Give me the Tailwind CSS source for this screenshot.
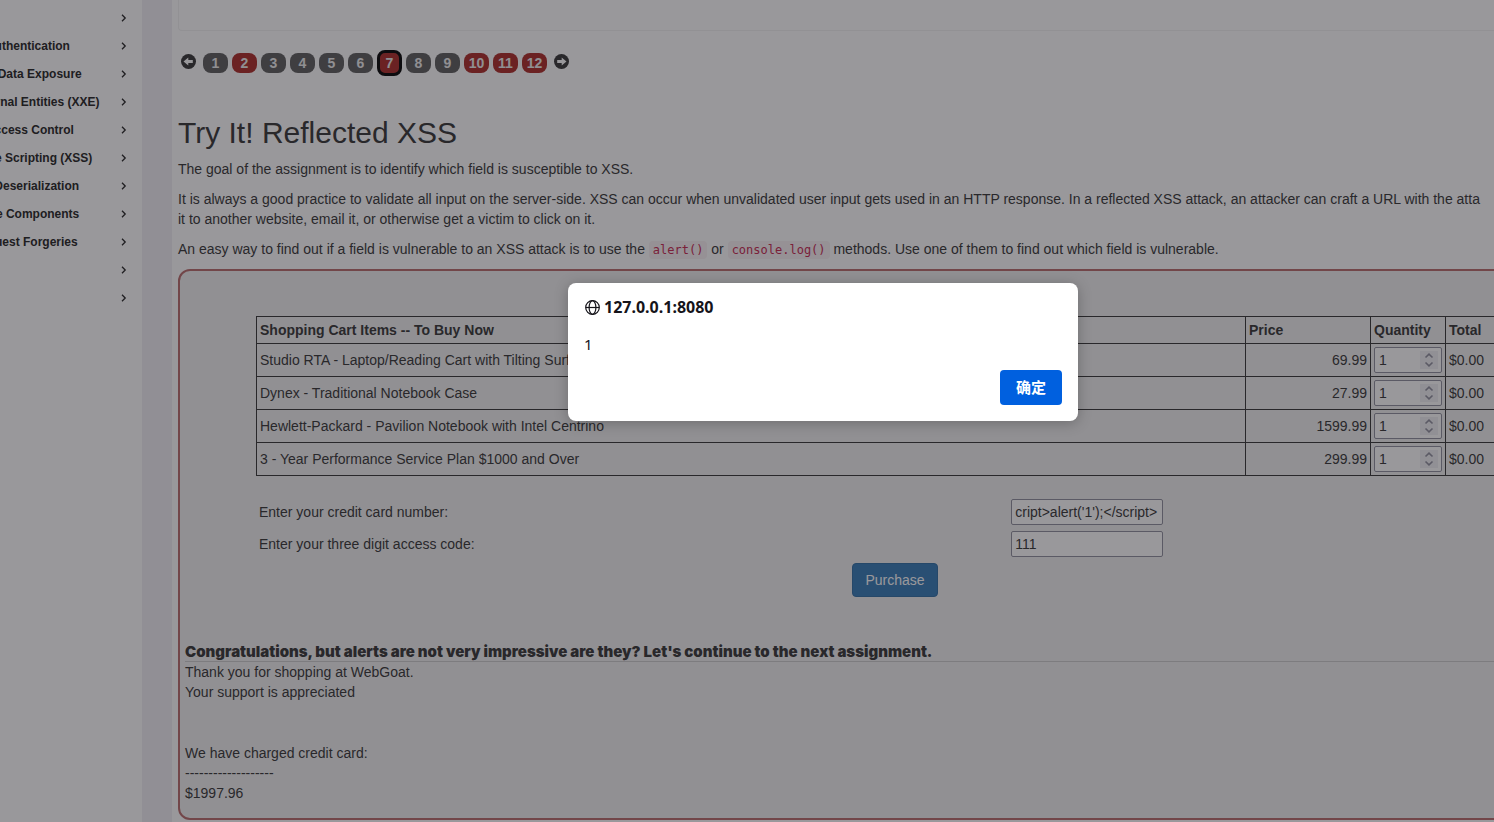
<!DOCTYPE html>
<html lang="en">
<head>
<meta charset="utf-8">
<title>WebGoat - Cross Site Scripting</title>
<script src="https://cdn.jsdelivr.net/npm/@tailwindcss/browser@4"></script>
</head>
<body class="relative min-h-screen overflow-hidden bg-white font-['Liberation_Sans',Arial,sans-serif] text-[14px] leading-5 text-[#333]">
<svg class="hidden" aria-hidden="true">
  <symbol id="chev" viewBox="0 0 6 8"><path d="M1 0.8 4.2 4 1 7.2" fill="none" stroke="currentColor" stroke-width="1.3"/></symbol>
  <symbol id="spin" viewBox="0 0 18 18"><path d="M5.5 6.5 9 3.2 12.5 6.5M5.5 11.5 9 14.8 12.5 11.5" fill="none" stroke="currentColor" stroke-width="1.6"/></symbol>
</svg>
<div class="flex min-h-screen">
  <aside class="w-[142px] shrink-0 overflow-hidden pt-1">
    <nav class="-ml-[85px] text-[12px] font-bold text-[#222]">
      <a href="#" aria-label="Injection" class="flex h-7 items-center justify-end pr-[15px]"><svg class="h-2 w-1.5"><use href="#chev"/></svg></a>
      <a href="#" class="flex h-7 items-center justify-between pr-[15px] whitespace-nowrap">(A2) Broken Authentication<svg class="h-2 w-1.5"><use href="#chev"/></svg></a>
      <a href="#" class="flex h-7 items-center justify-between pr-[15px] whitespace-nowrap">(A3) Sensitive Data Exposure<svg class="h-2 w-1.5"><use href="#chev"/></svg></a>
      <a href="#" class="flex h-7 items-center justify-between pr-[15px] whitespace-nowrap">(A4) XML External Entities (XXE)<svg class="h-2 w-1.5"><use href="#chev"/></svg></a>
      <a href="#" class="flex h-7 items-center justify-between pr-[15px] whitespace-nowrap">(A5) Broken Access Control<svg class="h-2 w-1.5"><use href="#chev"/></svg></a>
      <a href="#" class="flex h-7 items-center justify-between pr-[15px] whitespace-nowrap">(A7) Cross-Site Scripting (XSS)<svg class="h-2 w-1.5"><use href="#chev"/></svg></a>
      <a href="#" class="flex h-7 items-center justify-between pr-[15px] whitespace-nowrap">(A8) Insecure Deserialization<svg class="h-2 w-1.5"><use href="#chev"/></svg></a>
      <a href="#" class="flex h-7 items-center justify-between pr-[15px] whitespace-nowrap">(A9) Vulnerable Components<svg class="h-2 w-1.5"><use href="#chev"/></svg></a>
      <a href="#" class="flex h-7 items-center justify-between pr-[15px] whitespace-nowrap">(A8:2013) Request Forgeries<svg class="h-2 w-1.5"><use href="#chev"/></svg></a>
      <a href="#" aria-label="Client side" class="flex h-7 items-center justify-end pr-[15px]"><svg class="h-2 w-1.5"><use href="#chev"/></svg></a>
      <a href="#" aria-label="Challenges" class="flex h-7 items-center justify-end pr-[15px]"><svg class="h-2 w-1.5"><use href="#chev"/></svg></a>
    </nav>
  </aside>
  <div class="w-[30px] shrink-0 bg-[#f0eef4]"></div>
  <main class="-mr-[118px] min-w-0 flex-1 pl-1.5">
    <div class="h-[31px] rounded-b border-b border-l border-[#f3f3f3]"></div>
    <div class="mt-[19px] flex h-[26px] items-center gap-1 pl-[3px]">
      <a href="#" aria-label="Previous page" class="mr-[3px] pb-1"><svg class="size-[15px]" viewBox="0 0 15 15"><circle cx="7.500" cy="7.500" r="7.500" fill="#333"/><path d="M2.500 7.500 7.300 3.600V6H11.800V9H7.300V11.400Z" fill="#fff"/></svg></a>
      <a href="#" class="h-5 w-[25px] rounded-lg bg-[#5b5b5b] text-center font-bold text-[#eee]">1</a>
      <a href="#" class="h-5 w-[25px] rounded-lg bg-[#ac2925] text-center font-bold text-[#eee]">2</a>
      <a href="#" class="h-5 w-[25px] rounded-lg bg-[#5b5b5b] text-center font-bold text-[#eee]">3</a>
      <a href="#" class="h-5 w-[25px] rounded-lg bg-[#5b5b5b] text-center font-bold text-[#eee]">4</a>
      <a href="#" class="h-5 w-[25px] rounded-lg bg-[#5b5b5b] text-center font-bold text-[#eee]">5</a>
      <a href="#" class="h-5 w-[25px] rounded-lg bg-[#5b5b5b] text-center font-bold text-[#eee]">6</a>
      <a href="#" class="h-[26px] w-[25px] rounded-lg border-3 border-black bg-[#ac2925] text-center font-bold text-[#eee]">7</a>
      <a href="#" class="h-5 w-[25px] rounded-lg bg-[#5b5b5b] text-center font-bold text-[#eee]">8</a>
      <a href="#" class="h-5 w-[25px] rounded-lg bg-[#5b5b5b] text-center font-bold text-[#eee]">9</a>
      <a href="#" class="h-5 w-[25px] rounded-lg bg-[#ac2925] text-center font-bold text-[#eee]">10</a>
      <a href="#" class="h-5 w-[25px] rounded-lg bg-[#ac2925] text-center font-bold text-[#eee]">11</a>
      <a href="#" class="h-5 w-[25px] rounded-lg bg-[#ac2925] text-center font-bold text-[#eee]">12</a>
      <a href="#" aria-label="Next page" class="ml-[3px] pb-1"><svg class="size-[15px]" viewBox="0 0 15 15"><circle cx="7.500" cy="7.500" r="7.500" fill="#333"/><path d="M12.500 7.500 7.700 3.600V6H3.200V9H7.700V11.400Z" fill="#fff"/></svg></a>
    </div>
    <h1 class="mt-10 text-[30px] leading-[33px]">Try It! Reflected XSS</h1>
    <p class="mt-2.5">The goal of the assignment is to identify which field is susceptible to XSS.</p>
    <p class="mt-2.5 whitespace-nowrap">It is always a good practice to validate all input on the server-side. XSS can occur when unvalidated user input gets used in an HTTP response. In a reflected XSS attack, an attacker can craft a URL with the atta<br>it to another website, email it, or otherwise get a victim to click on it.</p>
    <p class="mt-2.5 h-5">An easy way to find out if a field is vulnerable to an XSS attack is to use the <code class="rounded bg-[#f9f2f4] px-1 py-0.5 font-['DejaVu_Sans_Mono',monospace] text-[12px] text-[#c7254e]">alert()</code> or <code class="rounded bg-[#f9f2f4] px-1 py-0.5 font-['DejaVu_Sans_Mono',monospace] text-[12px] text-[#c7254e]">console.log()</code> methods. Use one of them to find out which field is vulnerable.</p>

    <section class="mt-2.5 rounded-xl border-2 border-[#b96a6a] bg-[#f1f1f1] px-[5px] pb-[15px]">
      <form class="mx-auto w-[90%] pt-[45px]">
        <table class="w-full table-fixed border-collapse [&_td]:border [&_td]:border-[#333] [&_td]:px-[3px] [&_th]:border [&_th]:border-[#333] [&_th]:px-[3px] [&_th]:text-left">
          <thead>
            <tr class="h-[27px]"><th>Shopping Cart Items -- To Buy Now</th><th class="w-[125px]">Price</th><th class="w-[75px]">Quantity</th><th class="w-[88px]">Total</th></tr>
          </thead>
          <tbody>
            <tr class="h-[33px]"><td>Studio RTA - Laptop/Reading Cart with Tilting Surface - Cherry</td><td class="text-right">69.99</td><td><div class="flex h-[26px] w-[68px] items-center rounded-xs border border-[#8f8f9d] bg-white pr-[3px] pl-1"><input aria-label="Quantity of Studio RTA cart" value="1" class="w-0 flex-1 outline-none"><svg class="size-[18px] bg-[#f0f0f4] text-[#8f8f9d]"><use href="#spin"/></svg></div></td><td>$0.00</td></tr>
            <tr class="h-[33px]"><td>Dynex - Traditional Notebook Case</td><td class="text-right">27.99</td><td><div class="flex h-[26px] w-[68px] items-center rounded-xs border border-[#8f8f9d] bg-white pr-[3px] pl-1"><input aria-label="Quantity of Dynex case" value="1" class="w-0 flex-1 outline-none"><svg class="size-[18px] bg-[#f0f0f4] text-[#8f8f9d]"><use href="#spin"/></svg></div></td><td>$0.00</td></tr>
            <tr class="h-[33px]"><td>Hewlett-Packard - Pavilion Notebook with Intel Centrino</td><td class="text-right">1599.99</td><td><div class="flex h-[26px] w-[68px] items-center rounded-xs border border-[#8f8f9d] bg-white pr-[3px] pl-1"><input aria-label="Quantity of Pavilion notebook" value="1" class="w-0 flex-1 outline-none"><svg class="size-[18px] bg-[#f0f0f4] text-[#8f8f9d]"><use href="#spin"/></svg></div></td><td>$0.00</td></tr>
            <tr class="h-[33px]"><td>3 - Year Performance Service Plan $1000 and Over</td><td class="text-right">299.99</td><td><div class="flex h-[26px] w-[68px] items-center rounded-xs border border-[#8f8f9d] bg-white pr-[3px] pl-1"><input aria-label="Quantity of service plan" value="1" class="w-0 flex-1 outline-none"><svg class="size-[18px] bg-[#f0f0f4] text-[#8f8f9d]"><use href="#spin"/></svg></div></td><td>$0.00</td></tr>
          </tbody>
        </table>
        <div class="mt-[23px] grid grid-cols-[59%_1fr] items-center gap-y-1.5 pl-[3px]">
          <label for="card">Enter your credit card number:</label>
          <input id="card" value="cript&gt;alert('1');&lt;/script&gt;" class="h-[26px] w-[152px] rounded-xs border border-[#8f8f9d] bg-white px-[3px]">
          <label for="code">Enter your three digit access code:</label>
          <input id="code" value="111" class="h-[26px] w-[152px] rounded-xs border border-[#8f8f9d] bg-white px-[3px]">
        </div>
        <div class="mt-1.5 text-center"><button type="button" class="h-[34px] rounded border border-[#2e6da4] bg-[#337ab7] px-3 align-top text-white">Purchase</button></div>
      </form>
      <p class="mt-[45px] border-b border-[#ccc] font-['Inter','Liberation_Sans',sans-serif] text-[15px] leading-[19px] font-black">Congratulations, but alerts are not very impressive are they? Let's continue to the next assignment.</p>
      <p>Thank you for shopping at WebGoat.<br>Your support is appreciated</p>
      <p class="mt-[41px]">We have charged credit card:<br>-------------------<br>$1997.96</p>
    </section>
  </main>
</div>
<div class="absolute inset-0 bg-[#1c1b22]/45"></div>
<div role="alertdialog" aria-labelledby="origin" class="absolute top-[283px] left-[568px] flex w-[510px] flex-col rounded-lg bg-white p-4 font-['Noto_Sans','Noto_Sans_CJK_SC',sans-serif] text-[15px] text-[#15141a] shadow-[0_2px_14px_rgba(0,0,0,0.25)]">
  <div class="flex h-4 items-center gap-1 pl-px">
    <svg class="size-[15px]" viewBox="0 0 15 15" fill="none" stroke="currentColor" stroke-width="1.200"><circle cx="7.500" cy="7.500" r="6.800"/><ellipse cx="7.500" cy="7.500" rx="3.400" ry="6.800"/><path d="M.8 7.500H14.200"/></svg>
    <strong id="origin" class="text-[16px]">127.0.0.1:8080</strong>
  </div>
  <p class="mt-[19px]">1</p>
  <button type="button" class="mt-4 h-[35px] w-[62px] self-end rounded bg-[#0060df] pb-0.5 font-bold text-white">确定</button>
</div>
</body>
</html>
